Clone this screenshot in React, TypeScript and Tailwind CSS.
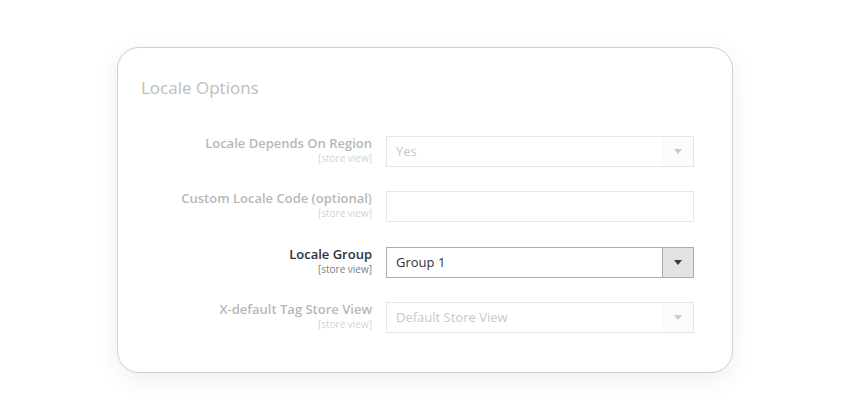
import React from "react";

function Arrow() {
  return (
    <svg width="8" height="5" viewBox="0 0 8 5" className="block">
      <polygon points="0,0 8,0 4,5" fill="#41362f" />
    </svg>
  );
}

type RowProps = {
  label: string;
  scope?: string;
  kind: "select" | "input";
  value?: string;
  disabled?: boolean;
};

function Row({ label, scope, kind, value, disabled }: RowProps) {
  return (
    <div className="flex items-start">
      <div className={`w-[268px] pr-[14px] text-right ${disabled ? "opacity-[0.35]" : ""}`}>
        <div className="text-[13px] leading-[17px] -mt-[1px] font-semibold text-[#303030]">{label}</div>
        {scope && <div className="text-[10px] leading-[13px] text-[#808080]">{scope}</div>}
      </div>
      <div
        className={`w-[308px] h-[31px] flex border bg-white ${
          disabled ? "border-[#e6e6e6]" : "border-[#adadad]"
        }`}
      >
        <div
          className={`flex-1 flex items-center pl-[9px] text-[13px] ${
            disabled ? "text-[#c8c8c8]" : "text-[#303030]"
          }`}
        >
          {value}
        </div>
        {kind === "select" && (
          <div
            className={`w-[31px] flex items-center justify-center border-l ${
              disabled ? "bg-[#f6f6f6] border-[#ececec] opacity-[0.25]" : "bg-[#e3e3e3] border-[#adadad]"
            }`}
          >
            <Arrow />
          </div>
        )}
      </div>
    </div>
  );
}

export default function App() {
  return (
    <div className="w-[850px] h-[420px] bg-white pt-[47px]" style={{ fontFamily: '"Open Sans", sans-serif' }}>
      <div className="mx-auto w-[616px] h-[326px] rounded-[22px] border border-[#cfcfcf] bg-white shadow-[0_6px_24px_rgba(0,0,0,0.07)]">
        <div className="pl-[23px] pt-[28px] text-[17px] leading-[24px] text-[#bdbdbd]">Locale Options</div>
        <div className="mt-[36px] flex flex-col gap-[24px]">
          <Row label="Locale Depends On Region" scope="[store view]" kind="select" value="Yes" disabled />
          <Row label="Custom Locale Code (optional)" scope="[store view]" kind="input" disabled />
          <div className="pt-[1px]">
            <Row label="Locale Group" scope="[store view]" kind="select" value="Group 1" />
          </div>
          <Row label="X-default Tag Store View" scope="[store view]" kind="select" value="Default Store View" disabled />
        </div>
      </div>
    </div>
  );
}
